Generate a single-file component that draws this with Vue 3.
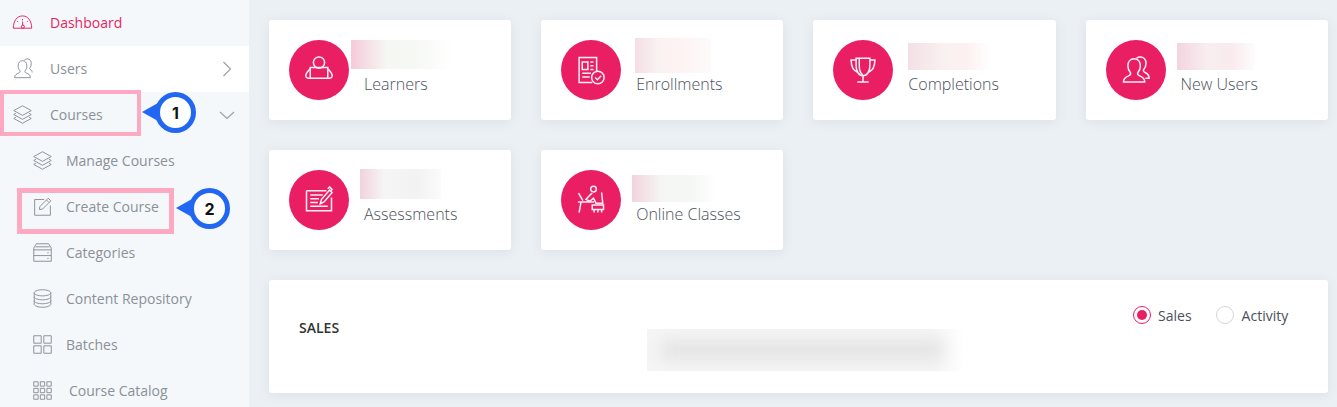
<script setup>
// icon strokes on a 24x24 box
const icons = {
  gauge: ['M1.5 18.500C1.500 10 5.800 4.500 12 4.500s10.500 5.500 10.500 14z', 'M12 8v1.500M6 10.500l1 1M18 10.500l-1 1', 'M12 11l.4 4.500', 'M14.200 16.800a1.800 1.800 0 1 1-3.600 0 1.800 1.800 0 0 1 3.600 0z'],
  users: ['M3 22.500c0-3.500 2.500-4.500 5-5.500 1.200-.5 1.500-1.200 1.200-2.200C8 13.500 7 11.500 7 9c0-3.500 2-6 5-6s5 2.500 5 6c0 2.500-1 4.500-2.200 5.800-.3 1 0 1.700 1.200 2.200 2.500 1 5 2 5 5.500z', 'M14 2.500c1-1 2.200-1.500 3.500-1.500 3 0 4.500 2.500 4.500 5.500 0 2-.8 3.800-1.800 5-.2 1 .2 1.500 1.300 2 1 .4 1.500 1.500 1.500 3'],
  layers: ['M12 2L22 7.500 12 13 2 7.500z', 'M4.500 10.500L2 12l10 5.500L22 12l-2.500-1.500', 'M4.500 15L2 16.500 12 22l10-5.500L19.500 15'],
  edit: ['M14 4H3v18h18V11', 'M9 12L18.500 2.500l3 3L12 15l-3.500.5z', 'M16.500 4.500l3 3'],
  server: ['M5 2h14l3 5v15H2V7z', 'M2 9h20M2 15.500h20', 'M17.500 12.300h1.500M17.500 18.800h1.500', 'M4 5.500h16'],
  database: ['M2.500 5.500C2.500 3.500 7 2 12 2s9.500 1.500 9.500 3.500S17 9 12 9 2.500 7.500 2.500 5.500z', 'M2.500 5.500v13C2.500 20.500 7 22 12 22s9.500-1.500 9.500-3.500v-13', 'M2.500 10c0 2 4.500 3.500 9.500 3.500s9.500-1.500 9.500-3.500', 'M2.500 14.500c0 2 4.500 3.500 9.500 3.500s9.500-1.500 9.500-3.500'],
  batches: ['M2 2h8.500v8.500H2zM13.500 2H22v8.500h-8.500zM2 13.500h8.500V22H2zM13.500 13.500H22V22h-8.500z'],
  catalog: ['M2 2h5v5H2zM9.500 2h5v5h-5zM17 2h5v5h-5zM2 9.500h5v5H2zM9.500 9.500h5v5h-5zM17 9.500h5v5h-5zM2 17h5v5H2zM9.500 17h5v5h-5zM17 17h5v5h-5z'],
  learner: ['M16.500 6a4.500 4.500 0 1 1-9 0 4.500 4.500 0 0 1 9 0z', 'M5 10h14v8.500H5z', 'M5 11c-1.500 1.500-3 3-3.500 5-.3 1.500.5 2.500 2 2.500H5M19 11c1.500 1.500 3 3 3.500 5 .3 1.500-.5 2.500-2 2.500H19'],
  enroll: ['M16.500 13V2H2.500v20H13', 'M5 5.500h4.500v6H5zM11.500 5.500H14M11.500 8.500H14M11.500 11.500H14M5 14.500h7M5 17.500h6', 'M22.500 18a5 5 0 1 1-10 0 5 5 0 0 1 10 0z', 'M15.300 18l1.800 1.800 3-3.200'],
  trophy: ['M6.500 2.500h11v6c0 4.500-2 8-5.500 8s-5.500-3.500-5.500-8z', 'M9 2.500v6c0 3.500 1 6 3 8', 'M6.500 4H2.500c0 5 1.500 8.500 5.500 10M17.500 4h4c0 5-1.500 8.500-5.500 10', 'M12 16.500v5M7.500 21.500h9'],
  people: ['M2 21.500c0-3 2-4 4-4.800 1.500-.6 2-1.300 1.600-2.500C6.500 13 5.500 11 5.500 8.800 5.500 5.300 7.500 3 10.500 3s5 2.300 5 5.800c0 2.200-1 4.200-2.100 5.400-.4 1.200.1 1.900 1.600 2.500 2 .8 4 1.800 4 4.800z', 'M12.500 2.500c.8-.6 1.800-1 2.800-1 3 0 4.700 2.300 4.700 5.300 0 2-.9 3.800-2 5-.3 1.200.2 1.800 1.500 2.400 1.800.8 3 1.800 3 4.300h-3'],
  sheet: ['M2 4.500h16M2 4.500v16h20V10', 'M5 8h10M5 11h7M5 14h6M5 17h14', 'M13 15l1-3.500 6.500-7.500 2 2-6.500 7.500z', 'M19 3l1.500-1.500 2 2L21 5'],
  desk: ['M1.500 13.500h13M4 13.500L2.500 22', 'M2 6.500l3.500 6', 'M14 5.500a2.300 2.300 0 1 0 0-4.600 2.300 2.300 0 0 0 0 4.600z', 'M13 6.500c-1.500 1-3 3-5 5l3 1.500 3-2.500 2 4h5', 'M20.500 6l1 9.500', 'M13 16h9v3.500h-9zM14.500 19.500V22M17.500 19.500V22M20.500 19.500V22']
}

const nav = [
  { label: 'Dashboard', icon: 'gauge', active: true },
  { label: 'Users', icon: 'users', white: true, chevron: 'right' },
  { label: 'Courses', icon: 'layers', chevron: 'down', mark: 1 }
]

const subNav = [
  { label: 'Manage Courses', icon: 'layers' },
  { label: 'Create Course', icon: 'edit', mark: 2 },
  { label: 'Categories', icon: 'server' },
  { label: 'Content Repository', icon: 'database' },
  { label: 'Batches', icon: 'batches' },
  { label: 'Course Catalog', icon: 'catalog', wide: true }
]

// x/y of the smudge are measured from the top left of the card
const pink = 'rgba(236, 150, 180, .5)'
const stats = [
  { label: 'Learners', icon: 'learner', blur: [82, 20, 102, 29], tint: `linear-gradient(90deg, ${pink}, #f5f7f3 35%, #f6f8f4 60%, #fff)` },
  { label: 'Enrollments', icon: 'enroll', blur: [94, 18, 76, 35], tint: 'linear-gradient(90deg, #f3dfe5, #faf1f1 30%, #fdf3f2 60%, #fdfbfb)' },
  { label: 'Completions', icon: 'trophy', blur: [95, 23, 83, 27], tint: 'linear-gradient(90deg, #f3e0e6, #f9f1f1 45%, #fcf1f0 70%, #fff)' },
  { label: 'New Users', icon: 'people', blur: [91, 23, 78, 27], tint: 'linear-gradient(90deg, #f3d5df, #f8eef0 40%, #f9eaee 70%, #fefcfc)' },
  { label: 'Assessments', icon: 'sheet', blur: [91, 19, 81, 30], tint: 'linear-gradient(90deg, #f1d3dd, #f6f5f6 30%, #f3f2f3 70%, #fbfbfb)' },
  { label: 'Online Classes', icon: 'desk', blur: [91, 25, 86, 27], tint: 'linear-gradient(90deg, #f1d3dd, #f5f6f3 35%, #f4f7f3 65%, #fff)' }
]

function blurStyle(s) {
  const [left, top, width, height] = s.blur
  return {
    left: left + 'px',
    top: top + 'px',
    width: width + 'px',
    height: height + 'px',
    background: s.tint
  }
}
</script>

<template>
  <div class="page">
    <aside class="sidebar">
      <div
        v-for="item in nav"
        :key="item.label"
        class="nav-row"
        :class="{ active: item.active, white: item.white }"
      >
        <svg class="nav-icon" viewBox="0 0 24 24">
          <path v-for="d in icons[item.icon]" :key="d" :d="d" />
        </svg>
        <span class="nav-label">{{ item.label }}</span>
        <svg v-if="item.chevron === 'right'" class="chev" viewBox="0 0 16 16">
          <path d="M4.500 1l7 7-7 7" />
        </svg>
        <svg v-if="item.chevron === 'down'" class="chev" viewBox="0 0 16 16">
          <path d="M1 5l7 6.500L15 5" />
        </svg>
        <template v-if="item.mark">
          <div class="mark-box mark-box-1"></div>
          <div class="bubble bubble-1">{{ item.mark }}</div>
        </template>
      </div>

      <div
        v-for="item in subNav"
        :key="item.label"
        class="nav-row sub"
      >
        <svg class="nav-icon" viewBox="0 0 24 24">
          <path v-for="d in icons[item.icon]" :key="d" :d="d" />
        </svg>
        <span class="nav-label" :class="{ wide: item.wide }">{{ item.label }}</span>
        <template v-if="item.mark">
          <div class="mark-box mark-box-2"></div>
          <div class="bubble bubble-2">{{ item.mark }}</div>
        </template>
      </div>
    </aside>

    <main class="main">
      <div class="stats">
        <div v-for="s in stats" :key="s.label" class="card">
          <div class="circle">
            <svg class="stat-icon" viewBox="0 0 24 24">
              <path v-for="d in icons[s.icon]" :key="d" :d="d" />
            </svg>
          </div>
          <div class="stat-label">{{ s.label }}</div>
          <div class="smudge" :style="blurStyle(s)"></div>
        </div>
      </div>

      <section class="sales">
        <h2 class="sales-title">SALES</h2>
        <div class="radios">
          <label class="radio on"><span class="ring"></span>Sales</label>
          <label class="radio"><span class="ring"></span>Activity</label>
        </div>
        <div class="sales-smudge"><div class="sales-smudge-in"></div></div>
      </section>
    </main>
  </div>
</template>

<style scoped>
.page {
  display: flex;
  width: 1337px;
  height: 407px;
  overflow: hidden;
  background: #ebf0f4;
  font-family: "Open Sans", sans-serif;
}

.sidebar {
  flex: 0 0 249px;
  background: #f4f8fa;
}
.nav-row {
  position: relative;
  display: flex;
  align-items: center;
  height: 46px;
  box-sizing: border-box;
  padding: 0 0 2px 12px;
  font-size: 14px;
  color: #8b9099;
}
.nav-row.sub {
  padding-left: 32px;
}
.nav-row.white {
  background: #fff;
}
.nav-row.active {
  color: #e91e63;
}
.nav-icon {
  flex: none;
  width: 21px;
  height: 21px;
  fill: none;
  stroke: currentColor;
  stroke-width: 1.100;
}
.nav-label {
  margin-left: 17px;
}
.sub .nav-label {
  margin-left: 13px;
}
.sub .nav-label.wide {
  margin-left: 16px;
}
.chev {
  position: absolute;
  right: 14px;
  top: 15px;
  width: 16px;
  height: 16px;
  fill: none;
  stroke: #9a9ea6;
  stroke-width: 1.1;
}

.mark-box {
  position: absolute;
  border: 4px solid #fca9c1;
  box-sizing: border-box;
}
.mark-box-1 {
  left: 0;
  top: -2px;
  width: 141px;
  height: 46px;
}
.mark-box-2 {
  left: 17px;
  top: 4px;
  width: 157px;
  height: 46px;
  border-width: 5px;
}
.bubble {
  position: absolute;
  width: 41px;
  height: 41px;
  box-sizing: border-box;
  display: flex;
  align-items: center;
  justify-content: center;
  border: 5px solid #2267f2;
  border-radius: 50%;
  background: #fff;
  color: #111;
  font-size: 16px;
  font-weight: 700;
  font-family: Inter, "Open Sans", sans-serif;
}
.bubble::before {
  content: "";
  position: absolute;
  left: -18px;
  top: 6px;
  border-style: solid;
  border-width: 9px 16px 9px 0;
  border-color: transparent #2267f2 transparent transparent;
}
.bubble-1 {
  left: 155px;
  top: 0;
}
.bubble-2 {
  left: 189px;
  top: 4px;
}

.main {
  flex: 1;
  min-width: 0;
  padding: 20px 9.300px 0 20px;
}
.stats {
  display: grid;
  grid-template-columns: repeat(4, 1fr);
  gap: 30px;
}
.card {
  position: relative;
  display: flex;
  height: 100px;
  box-sizing: border-box;
  padding: 20px;
  background: #fff;
  border-radius: 3px;
  box-shadow: 0 2px 12px rgba(70, 100, 140, 0.1);
}
.circle {
  flex: none;
  display: flex;
  align-items: center;
  justify-content: center;
  width: 60px;
  height: 60px;
  border-radius: 50%;
  background: #ea1f63;
}
.stat-icon {
  width: 30px;
  height: 30px;
  fill: none;
  stroke: #fff0f5;
  stroke-width: 1.200;
}
.stat-label {
  margin: 33px 0 0 15px;
  font-size: 16px;
  line-height: 22px;
  font-weight: 300;
  color: #4c525c;
  white-space: nowrap;
}
.smudge {
  position: absolute;
}

.sales {
  position: relative;
  display: flex;
  justify-content: space-between;
  height: 113px;
  box-sizing: border-box;
  margin-top: 30px;
  padding: 24px 39.500px 0 30px;
  background: #fff;
  border-radius: 3px;
  box-shadow: 0 2px 12px rgba(70, 100, 140, 0.1);
}
.sales-title {
  margin: 15px 0 0;
  font-size: 14px;
  line-height: 18px;
  font-weight: 600;
  color: #333;
}
.radios {
  display: flex;
  gap: 24.500px;
}
.radio {
  display: flex;
  align-items: center;
  gap: 7.500px;
  height: 22px;
  font-size: 14px;
  color: #4a505a;
}
.ring {
  position: relative;
  width: 18px;
  height: 18px;
  box-sizing: border-box;
  border: 1px solid #d6d6d6;
  border-radius: 50%;
}
.radio.on .ring {
  border-color: #ea1f63;
}
.radio.on .ring::after {
  content: "";
  position: absolute;
  inset: 3px;
  border-radius: 50%;
  background: #ea1f63;
}
.sales-smudge {
  position: absolute;
  left: 378px;
  top: 49px;
  width: 318px;
  height: 42px;
  overflow: hidden;
  background: linear-gradient(90deg, #f5f5f5 90%, #fff);
}
.sales-smudge-in {
  margin: 11px 0 0 14px;
  width: 282px;
  height: 20px;
  background: #e4e4e4;
  filter: blur(8px);
}
</style>

<style>
html,
body {
  overflow: hidden;
}
</style>
